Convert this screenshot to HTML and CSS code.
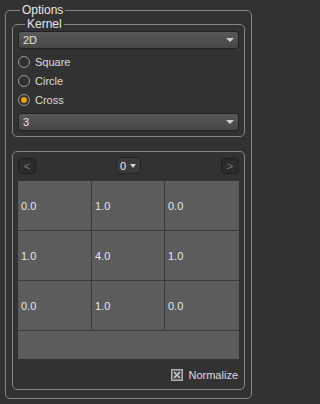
FILE: index.html
```html
<!DOCTYPE html>
<html>
<head>
<meta charset="utf-8">
<link rel="stylesheet" href="styles.css">
</head>
<body>
<div class="page">
<fieldset class="group outer">
  <legend class="legend">Options</legend>
  <fieldset class="group kernel">
    <legend class="legend">Kernel</legend>
    <div class="combo"><span>2D</span><span class="arrow"></span></div>
    <div class="radios">
      <div class="radio"><span class="dot"></span><span>Square</span></div>
      <div class="radio"><span class="dot"></span><span>Circle</span></div>
      <div class="radio"><span class="dot on"></span><span>Cross</span></div>
    </div>
    <div class="combo combo-last"><span>3</span><span class="arrow"></span></div>
  </fieldset>
  <fieldset class="group matrix">
    <div class="toolbar">
      <div class="navbtn">&lt;</div>
      <div class="spin"><span>0</span><span class="arrow small"></span></div>
      <div class="navbtn">&gt;</div>
    </div>
    <div class="table">
      <div class="grid">
        <div class="cell">0.0</div><div class="cell">1.0</div><div class="cell">0.0</div>
        <div class="cell">1.0</div><div class="cell">4.0</div><div class="cell">1.0</div>
        <div class="cell">0.0</div><div class="cell">1.0</div><div class="cell">0.0</div>
      </div>
    </div>
    <div class="footer">
      <svg class="check" width="12" height="12" viewBox="0 0 12 12">
        <rect x="0.5" y="0.5" width="11" height="11" fill="#9a9a9a" stroke="#b4b4b4"/>
        <rect x="1.5" y="1.5" width="9" height="9" fill="#4a4a4a"/>
        <path d="M3 3 L9 9 M9 3 L3 9" stroke="#c8c8c8" stroke-width="1.6"/>
      </svg>
      <span>Normalize</span>
    </div>
  </fieldset>
</fieldset>
</div>
</body>
</html>
```
FILE: styles.css
```css
html, body {
  margin: 0;
  padding: 0;
  background: #323232;
}
body {
  font-family: "Liberation Sans", Arial, sans-serif;
  font-size: 11px;
  color: #dcdcdc;
}
.page {
  width: 257px;
  height: 404px;
  box-sizing: border-box;
  padding: 4px 5px 0 5px;
}
*, *::before, *::after {
  box-sizing: border-box;
}
.group {
  margin: 0;
  border: 1px solid #858585;
  border-radius: 5px;
  min-width: 0;
}
.legend {
  padding: 0 2px;
  margin-left: 8px;
  height: 13px;
  line-height: 13px;
  font-size: 12px;
  color: #e6e6e6;
}
.outer {
  width: 247px;
  padding: 1px 6px 8px 6px;
}
.kernel {
  width: 233px;
  padding: 0 5px 5px 5px;
}
.kernel .legend {
  margin-left: 7px;
}
.combo {
  height: 18px;
  width: 221px;
  border: 1px solid #222;
  border-radius: 3px;
  background: linear-gradient(#585858, #474747);
  display: flex;
  align-items: center;
  justify-content: space-between;
  padding: 0 4px 0 4px;
  color: #e4e4e4;
}
.arrow {
  width: 0;
  height: 0;
  border-left: 4px solid transparent;
  border-right: 4px solid transparent;
  border-top: 4px solid #d0d0d0;
}
.arrow.small {
  border-left-width: 3.5px;
  border-right-width: 3.5px;
}
.radios {
  margin-top: 3px;
  display: flex;
  flex-direction: column;
}
.radio {
  height: 19px;
  display: flex;
  align-items: center;
  gap: 5px;
}
.dot {
  width: 12px;
  height: 12px;
  border: 1px solid #9a9a9a;
  border-radius: 50%;
  background: #303030;
  display: flex;
  align-items: center;
  justify-content: center;
}
.dot.on::after {
  content: "";
  width: 6px;
  height: 6px;
  border-radius: 50%;
  background: #f3a300;
}
.combo-last {
  margin-top: 4px;
}
.matrix {
  width: 233px;
  margin-top: 14px;
  padding: 5px 5px 8px 5px;
}
.toolbar {
  height: 17px;
  width: 221px;
  display: flex;
  align-items: center;
  justify-content: space-between;
}
.navbtn {
  width: 18px;
  height: 16px;
  border: 1px solid #1f1f1f;
  border-radius: 4px;
  background: #2c2c2c;
  color: #7c7c7c;
  font-size: 11px;
  display: flex;
  align-items: center;
  justify-content: center;
}
.spin {
  width: 25px;
  height: 17px;
  border: 1px solid #222;
  border-radius: 4px;
  background: #3a3a3a;
  display: flex;
  align-items: center;
  gap: 4px;
  padding-left: 3px;
  color: #eee;
}
.table {
  margin-top: 7px;
  width: 221px;
  height: 178px;
  background: #5c5c5c;
}
.grid {
  display: grid;
  grid-template-columns: 74px 73px 74px;
  grid-template-rows: repeat(3, 50px);
}
.cell {
  border-right: 1px solid #3c3c3c;
  border-bottom: 1px solid #3c3c3c;
  display: flex;
  align-items: center;
  padding-left: 3px;
  color: #e2e6f0;
  font-size: 11px;
}
.cell:nth-child(3n) {
  border-right: none;
}
.footer {
  margin-top: 9px;
  height: 13px;
  width: 221px;
  display: flex;
  align-items: center;
  justify-content: flex-end;
  gap: 5px;
  padding-right: 1px;
  color: #dcdce6;
}
.check {
  display: block;
}
```
